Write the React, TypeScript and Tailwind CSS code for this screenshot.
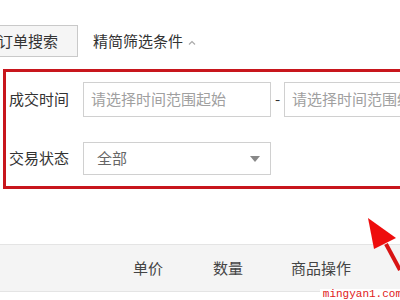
import React from 'react';

const font = { fontFamily: '"Noto Sans CJK SC", "Noto Sans", sans-serif' };

export default function App() {
  return (
    <div className="relative w-[400px] h-[300px] overflow-hidden bg-white text-[#333]" style={font}>
      {/* tabs */}
      <div className="flex items-center pt-[25px]">
        <div className="-ml-[22px] shrink-0 h-[32px] w-[100px] flex items-center justify-center border border-[#c9c9c9] bg-[#f5f5f5] text-[15px]">
          订单搜索
        </div>
        <div className="ml-[15px] flex items-center text-[15px]">
          精简筛选条件
          <svg width="10" height="8" viewBox="0 0 10 8" className="ml-[4px] mt-[3px]">
            <path d="M2 5.5 L5 2.5 L8 5.5" fill="none" stroke="#aaa" strokeWidth="1.2" />
          </svg>
        </div>
      </div>

      {/* filter box */}
      <div className="mt-[12px] ml-[3px] w-[420px] h-[120px] border-[3px] border-r-0 border-[#c8161d] pt-[10px] pl-[3px] flex flex-col gap-[25px]">
        <div className="flex items-center">
          <div className="w-[74px] shrink-0 text-[15px]">成交时间</div>
          <div className="w-[188px] shrink-0 h-[35px] border border-[#d0d0d0] flex items-center pl-[7px] text-[15px] text-[#a0a0a0]">
            请选择时间范围起始
          </div>
          <div className="w-[13px] shrink-0 text-center text-[15px]">-</div>
          <div className="w-[188px] shrink-0 h-[35px] border border-[#d0d0d0] flex items-center pl-[7px] text-[15px] text-[#a0a0a0] whitespace-nowrap overflow-hidden">
            请选择时间范围结束
          </div>
        </div>
        <div className="flex items-center">
          <div className="w-[74px] shrink-0 text-[15px]">交易状态</div>
          <div className="w-[188px] shrink-0 h-[33px] border border-[#d0d0d0] flex items-center justify-between pl-[13px] pr-[10px] text-[15px] text-[#666]">
            全部
            <svg width="10" height="6" viewBox="0 0 10 6">
              <path d="M0 0 L10 0 L5 6 Z" fill="#888" />
            </svg>
          </div>
        </div>
      </div>

      {/* table header */}
      <div className="mt-[55px] h-[48px] bg-[#f4f4f4] border-y border-[#e4e4e4] flex items-center text-[15px] text-[#444]">
        <div className="ml-[133px]">单价</div>
        <div className="ml-[50px]">数量</div>
        <div className="ml-[48px]">商品操作</div>
      </div>

      {/* arrow */}
      <svg className="absolute left-[360px] top-[212px]" width="40" height="70" viewBox="0 0 40 70">
        <path d="M8 6 L36 26 L14 37 Z" fill="#ee0d0d" />
        <path d="M26 32 L40 58" stroke="#d81414" strokeWidth="4" />
      </svg>

      <div
        className="absolute right-[-2px] bottom-[0px] text-[11px] text-[#e02020] leading-none bg-white pl-[3px]"
        style={{ fontFamily: '"Liberation Mono", monospace' }}
      >
        mingyan1.com
      </div>
    </div>
  );
}
